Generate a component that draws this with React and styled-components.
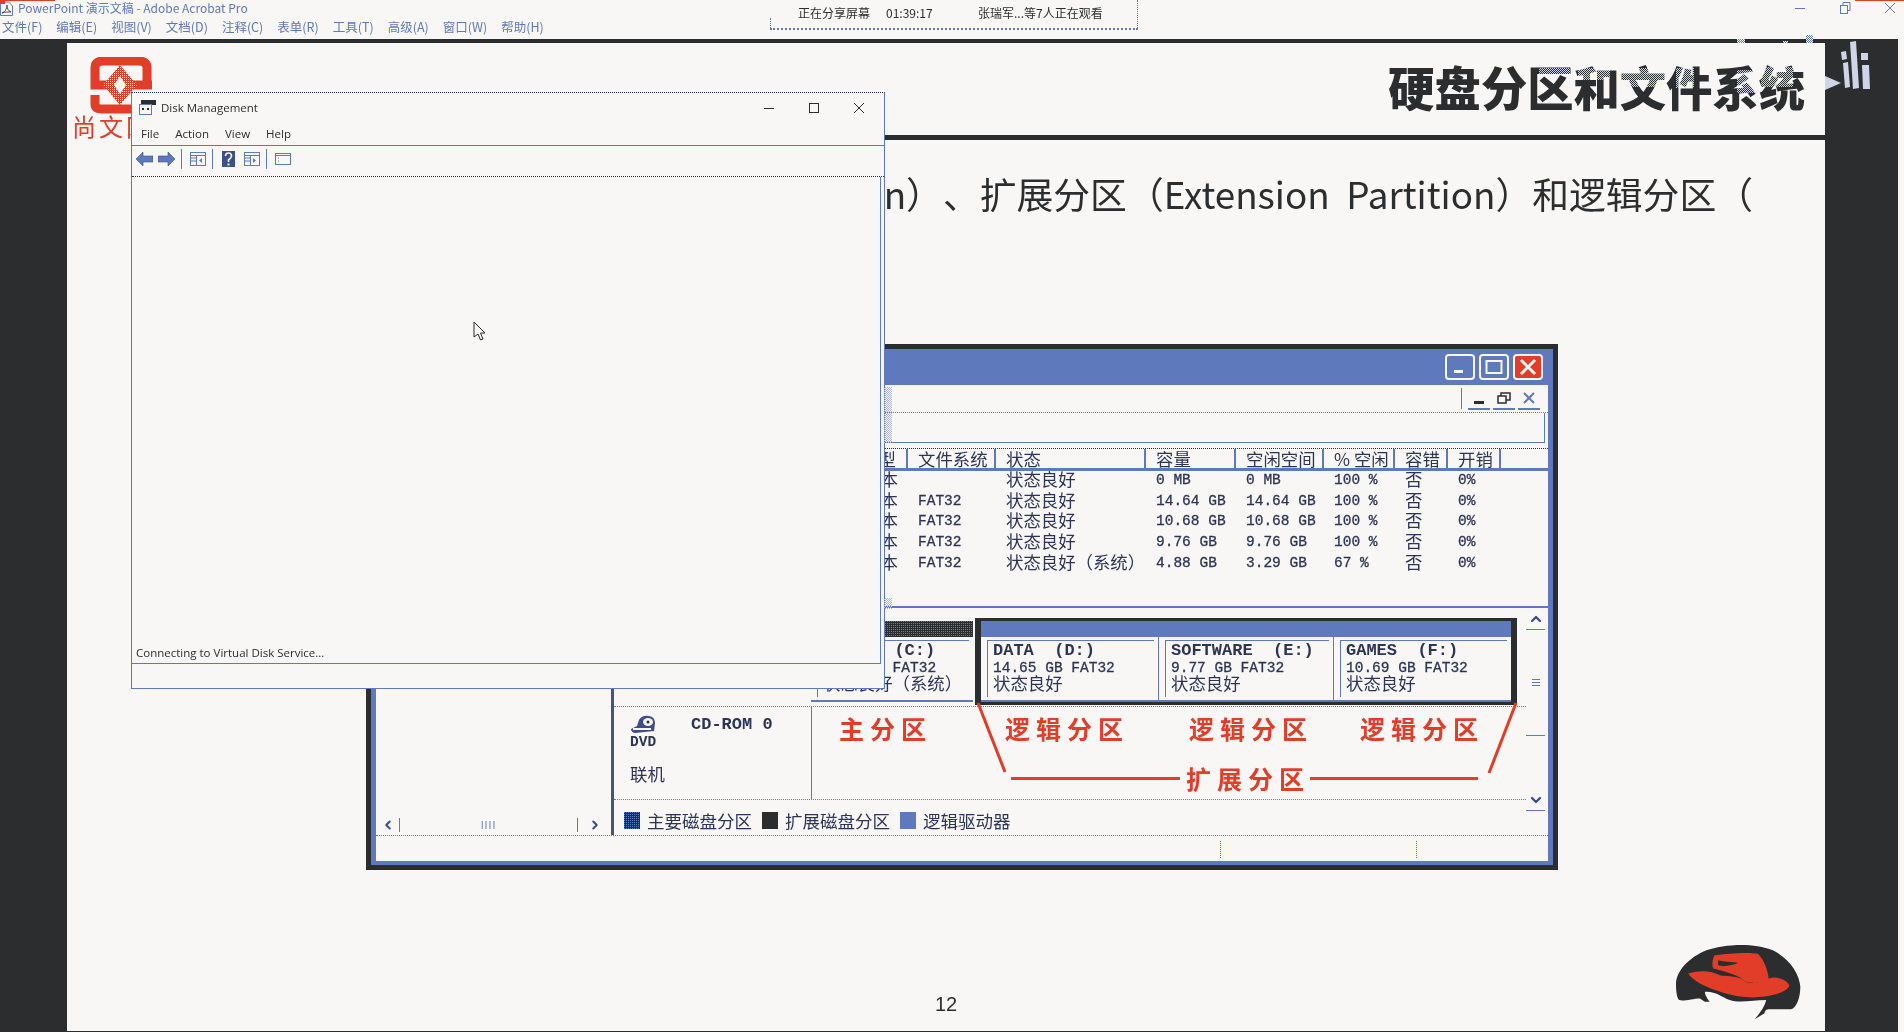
import React from "react";
import styled, { createGlobalStyle } from "styled-components";
import { ChevronLeft, ChevronRight, ChevronUp, ChevronDown } from "lucide-react";

const DARK = "#2b2d2f";
const BLUE = "#5f79bd";
const PAPER = "#f8f7f5";
const RED = "#e23d28";
const INK = "#2c3558";
const CJK = `"Noto Sans CJK SC", "Noto Sans", sans-serif`;
const MONO = `"Liberation Mono", "Noto Sans CJK SC", monospace`;
const UI = `"Open Sans", "Noto Sans CJK SC", sans-serif`;
const DITHER = `repeating-conic-gradient(${DARK} 0 75%, ${BLUE} 0 100%) 0 0 / 2px 2px`;

const Global = createGlobalStyle`
  * { box-sizing: border-box; }
  html, body { margin: 0; padding: 0; background: ${PAPER}; overflow: hidden; }
  body { font-family: ${CJK}; text-spacing-trim: space-all; }
`;

const Page = styled.div`
  position: relative;
  width: 1904px;
  height: 1032px;
  overflow: hidden;
`;

/* ---- acrobat chrome ---- */
const AppBar = styled.header`
  position: relative;
  height: 39px;
  background: ${PAPER};
  color: ${BLUE};
  font-size: 12px;
  &::before, &::after {
    content: "";
    position: absolute;
    top: 0;
    height: 1px;
    background: ${RED};
  }
  &::before { left: 0; width: 55px; }
  &::after { right: 0; width: 49px; }
`;

const AppTitle = styled.div`
  display: flex;
  align-items: center;
  gap: 5px;
  height: 16px;
  white-space: nowrap;
  line-height: 16px;
`;

const AppMenu = styled.nav`
  display: flex;
  gap: 14px;
  padding: 2px 0 0 2px;
  font-size: 12.5px;
  line-height: 17px;
  white-space: nowrap;
`;

const AppControls = styled.div`
  position: absolute;
  top: 0;
  right: 7px;
  display: flex;
  gap: 31px;
  height: 15px;
  align-items: center;
`;

const ShareBar = styled.div`
  position: absolute;
  top: 0;
  left: 770px;
  width: 368px;
  height: 30px;
  padding: 4px 0 0 28px;
  display: grid;
  grid-template-columns: 88px 92px auto;
  font-size: 12px;
  line-height: 17px;
  color: ${DARK};
  border-bottom: 2px dotted ${BLUE};
  border-right: 1px dotted ${BLUE};
  &::before {
    content: "";
    position: absolute;
    left: 0;
    bottom: 0;
    height: 10px;
    border-left: 1px dotted ${BLUE};
  }
`;

/* ---- slide ---- */
const Stage = styled.div`
  display: flex;
  height: 993px;
  background: ${DARK};
`;

const Slide = styled.main`
  display: flex;
  flex-direction: column;
  width: 1758px;
  margin: 4px 0 1px 67px;
  background: ${PAPER};
`;

const RightGutter = styled.div`
  position: relative;
  width: 73px;
`;

const EdgeStrip = styled.div`
  width: 6px;
  background: ${PAPER};
`;

const SlideHead = styled.div`
  display: flex;
  height: 97px;
`;

const Brand = styled.div`
  width: 66px;
  margin-left: 5px;
  padding-top: 14px;
`;

const BrandLogo = styled.svg`
  display: block;
  margin-left: 18px;
`;

const BrandName = styled.div`
  margin-top: -2px;
  font-size: 24px;
  letter-spacing: 3px;
  line-height: 26px;
  white-space: nowrap;
  color: ${RED};
`;

const SlideTitle = styled.h1`
  flex: 1;
  margin: 0;
  padding: 0 20px 8px 0;
  display: flex;
  align-items: center;
  justify-content: flex-end;
  font-size: 46.3px;
  font-weight: 900;
  color: ${DARK};
  border-bottom: 5px solid ${DARK};
`;

/* screen-share artefact: patches of dither eating into the title glyphs */
const TitleGlitch = styled.div`
  position: absolute;
  left: ${(p) => p.$x}px;
  top: ${(p) => p.$y}px;
  width: ${(p) => p.$w}px;
  height: ${(p) => p.$h}px;
  background: repeating-conic-gradient(#cfd6ea 0 25%, #000 0 50%) 0 0 / 2px 2px;
  mix-blend-mode: lighten;
`;

const Speck = styled.div`
  position: absolute;
  left: ${(p) => p.$x}px;
  top: ${(p) => p.$y}px;
  width: ${(p) => p.$w}px;
  height: ${(p) => p.$h}px;
  background: repeating-conic-gradient(${BLUE} 0 25%, ${PAPER} 0 50%) 0 0 / 2px 2px;
`;

const Lead = styled.p`
  height: 204px;
  margin: 0;
  padding: 29px 72px 0 0;
  text-align: right;
  font-size: 36.8px;
  line-height: 48px;
  color: ${DARK};
  white-space: pre;
`;

const SlideFoot = styled.footer`
  flex: 1;
  display: grid;
  grid-template-columns: 1fr auto 1fr;
`;

const PageNo = styled.div`
  margin-top: 122px;
  font-family: "Liberation Sans", sans-serif;
  font-size: 20px;
  line-height: 24px;
  color: ${DARK};
`;

const Hat = styled.svg`
  justify-self: end;
  margin: 73px 24px 0 0;
  width: 126px;
  height: 77px;
`;

/* ---- screenshot of xp disk management on the slide ---- */
const XpWindow = styled.section`
  width: 1192px;
  height: 526px;
  margin-left: 299px;
  border: 5px solid ${DARK};
`;

const XpFrame = styled.div`
  display: flex;
  flex-direction: column;
  height: 100%;
  background: ${PAPER};
  border: solid ${BLUE};
  border-width: 0 5px 4px;
`;

const XpTitle = styled.div`
  display: flex;
  flex: none;
  align-items: center;
  justify-content: flex-end;
  gap: 4px;
  height: 36px;
  padding-right: 5px;
  background: ${BLUE};
`;

const CaptionBtn = styled.div`
  display: flex;
  align-items: center;
  justify-content: center;
  width: 30px;
  height: 26px;
  border: 2px solid ${PAPER};
  border-radius: 4px;
  background: ${(p) => (p.$close ? RED : "transparent")};
`;

const XpMenu = styled.div`
  display: flex;
  flex: none;
  justify-content: flex-end;
  height: 28px;
  padding: 3px 8px 3px 0;
  border-bottom: 1px dotted ${BLUE};
`;

const MdiButtons = styled.div`
  display: flex;
  gap: 3px;
  padding-left: 6px;
  border-left: 1px solid ${BLUE};
`;

const MdiBtn = styled.div`
  display: flex;
  align-items: center;
  justify-content: center;
  width: 22px;
  height: 22px;
  border-bottom: 2px solid ${BLUE};
`;

const XpTools = styled.div`
  flex: none;
  height: 30px;
  margin-right: 3px;
  border-right: 1px solid ${BLUE};
  border-bottom: 1px solid ${BLUE};
`;

const Split = styled.div`
  display: grid;
  flex: none;
  grid-template-columns: 238px 934px;
  height: 392px;
`;

const TreePane = styled.aside`
  display: flex;
  flex-direction: column;
  justify-content: flex-end;
  border-right: 3px solid #46537d;
`;

const TreeScroll = styled.div`
  display: grid;
  grid-template-columns: 23px 1fr 33px;
  align-items: center;
  justify-items: center;
  height: 18px;
  margin-bottom: 1px;
  color: #3c4f8a;
`;

const TreeTrack = styled.div`
  display: flex;
  align-items: center;
  justify-content: center;
  width: 100%;
  height: 14px;
  border: solid ${BLUE};
  border-width: 0 1px;
  color: ${BLUE};
  font-size: 10px;
  letter-spacing: 1px;
  line-height: 14px;
`;

const ListArea = styled.div`
  height: 165px;
  padding-top: 5px;
  border-bottom: 2px solid ${BLUE};
`;

const ListRow = styled.div`
  display: grid;
  grid-template-columns: 294px 88px 150px 90px 88px 71px 53px 53px;
  height: ${(p) => (p.$head ? "23px" : "20.7px")};
  align-items: center;
  color: ${INK};
`;

const ListHead = styled(ListRow)`
  border-top: 1px dotted ${DARK};
  border-bottom: 3px solid ${BLUE};
`;

const Cell = styled.div`
  height: 100%;
  padding: 0 ${(p) => (p.$first ? "10px" : "0")} 0 ${(p) => (p.$first ? "0" : "10px")};
  font-family: ${(p) => (p.$mono ? MONO : CJK)};
  font-size: ${(p) => (p.$mono ? "14.5px" : "17.4px")};
  line-height: ${(p) => (p.$head ? "19px" : p.$mono ? "19px" : "15px")};
  -webkit-text-stroke: ${(p) => (p.$mono ? "0.3px" : "0")};
  text-align: ${(p) => (p.$first ? "right" : "left")};
  white-space: pre;
  border-right: ${(p) => (p.$head ? `2px solid ${BLUE}` : "0")};
`;

const MapArea = styled.div`
  position: relative;
  display: grid;
  grid-template-columns: 912px 22px;
  height: 227px;
`;

const MapMain = styled.div`
  display: flex;
  flex-direction: column;
`;

const DiskRow = styled.div`
  display: flex;
  align-items: flex-start;
  height: 99px;
  padding: 10px 0 0 197px;
  border-bottom: 1px dotted ${BLUE};
`;

const PrimaryBox = styled.div`
  width: 164px;
  margin-top: 3px;
  padding-right: 2px;
`;

const ExtendedBox = styled.div`
  display: grid;
  grid-template-columns: 178px 175px 177px;
  width: 542px;
  height: 87px;
  border: solid ${DARK};
  border-width: 3px 6px;
`;

const Partition = styled.div`
  height: 81px;
  border-bottom: 2px solid ${BLUE};
  border-right: ${(p) => (p.$last ? "0" : `1px solid ${BLUE}`)};
`;

const PartStrip = styled.div`
  height: 16px;
  background: ${(p) => (p.$primary ? DITHER : BLUE)};
`;

const PartBody = styled.div`
  height: 57px;
  margin: 3px 4px 0 6px;
  padding: 1px 0 0 5px;
  border: solid ${BLUE};
  border-width: 1px 0 0 1px;
  color: ${INK};
  white-space: pre;
`;

const PartName = styled.div`
  font-family: ${MONO};
  font-size: 17px;
  font-weight: 700;
  line-height: 18px;
`;

const PartSize = styled.div`
  font-family: ${MONO};
  font-size: 14.5px;
  line-height: 17px;
  -webkit-text-stroke: 0.3px;
`;

const PartState = styled.div`
  margin-top: -2px;
  font-size: 17.4px;
  line-height: 15px;
`;

const CdRow = styled.div`
  display: grid;
  grid-template-columns: 197px 715px;
  height: 93px;
  border-bottom: 1px dotted ${BLUE};
`;

const CdInfo = styled.div`
  display: flex;
  padding: 8px 0 0 16px;
  color: ${INK};
`;

const CdStack = styled.div`
  width: 61px;
  font-family: ${MONO};
  font-size: 14.5px;
  font-weight: 700;
  line-height: 16px;
`;

const CdStatus = styled.div`
  margin-top: 16px;
  font-family: ${CJK};
  font-size: 17.4px;
  font-weight: 400;
`;

const CdIcon = styled.svg`
  display: block;
`;

const CdName = styled.div`
  font-family: ${MONO};
  font-size: 17px;
  font-weight: 700;
  line-height: 20px;
`;

const CalloutPane = styled.div`
  border-left: 1px solid ${BLUE};
  padding-top: 6px;
`;

const Labels = styled.div`
  display: grid;
  grid-template-columns: 193px 184px 171px auto;
`;

const Label = styled.div`
  padding-left: ${(p) => p.$indent || 0}px;
  font-size: 25px;
  font-weight: 700;
  letter-spacing: 6px;
  line-height: 30px;
  white-space: nowrap;
  color: ${RED};
`;

const BraceRow = styled.div`
  display: flex;
  align-items: center;
  margin: 20px 0 0 199px;
`;

const BraceRule = styled.div`
  width: ${(p) => p.$w}px;
  height: 3px;
  margin-right: ${(p) => p.$gap || 0}px;
  background: ${RED};
`;

const Legend = styled.div`
  display: flex;
  align-items: center;
  gap: 10px;
  height: 35px;
  padding: 6px 0 0 10px;
  font-size: 17.5px;
  color: ${INK};
`;

const LegendItem = styled.div`
  display: flex;
  align-items: center;
  gap: 7px;
`;

const Swatch = styled.span`
  width: 16px;
  height: 17px;
  background: ${(p) => (p.$kind === "primary" ? DITHER : p.$kind === "extended" ? DARK : BLUE)};
`;

const MapScroll = styled.div`
  display: flex;
  flex-direction: column;
  padding-right: 3px;
  color: #3c4f8a;
`;

const ScrollBtn = styled.div`
  display: flex;
  align-items: center;
  justify-content: center;
  flex: none;
  height: 22px;
  border-bottom: 1px solid ${BLUE};
`;

const ScrollThumb = styled.div`
  display: flex;
  flex-direction: column;
  flex: none;
  align-items: center;
  justify-content: center;
  gap: 2px;
  height: 106px;
  border-bottom: 1px solid ${BLUE};
`;

const Grip = styled.span`
  width: 8px;
  height: 1px;
  background: ${BLUE};
`;

const ScrollGap = styled.div`
  flex: none;
  height: 53px;
`;

const CalloutLines = styled.svg`
  position: absolute;
  top: 0;
  left: 0;
  pointer-events: none;
`;

const XpStatus = styled.div`
  display: grid;
  flex: none;
  grid-template-columns: 844px 196px 1fr;
  height: 26px;
  padding: 5px 0 3px;
  border-top: 1px dotted ${BLUE};
`;

const StatusCell = styled.div`
  border-left: ${(p) => (p.$first ? "0" : `1px dotted ${BLUE}`)};
`;

/* ---- live windows over the slide ---- */
const DiskMgmt = styled.section`
  position: absolute;
  top: 92px;
  left: 131px;
  display: flex;
  flex-direction: column;
  width: 754px;
  height: 597px;
  background: ${PAPER};
  border: 1px solid ${BLUE};
  border-top: 1px dotted #1f2a4a;
  font-family: ${UI};
  color: ${DARK};
`;

const ShadowPatch = styled.div`
  position: absolute;
  top: ${(p) => p.$top}px;
  left: 100%;
  width: 8px;
  height: ${(p) => p.$h}px;
  background: repeating-conic-gradient(#aebbdc 0 25%, transparent 0 50%) 0 0 / 2px 2px;
`;

const DmTitle = styled.div`
  display: flex;
  align-items: center;
  height: 29px;
  padding: 0 0 0 7px;
  gap: 5px;
  font-size: 11.5px;
`;

const DmName = styled.span`
  flex: 1;
`;

const DmControls = styled.div`
  display: flex;
  gap: 33px;
  padding-right: 19px;
  align-items: center;
`;

const DmMenu = styled.nav`
  display: flex;
  gap: 16px;
  height: 24px;
  padding-left: 9px;
  font-size: 11.5px;
  line-height: 24px;
  border-bottom: 1px solid ${BLUE};
`;

const DmTools = styled.div`
  display: flex;
  align-items: center;
  height: 31px;
  padding: 0 0 4px 4px;
  border-bottom: 1px dotted #1f2a4a;
`;

const ToolSep = styled.span`
  width: 1px;
  height: 20px;
  margin: 0 ${(p) => p.$r || 8}px 0 6px;
  background: ${BLUE};
`;

const ToolIcon = styled.svg`
  flex: none;
  margin-right: ${(p) => p.$gap || 0}px;
  transform: ${(p) => (p.$flip ? "scaleX(-1)" : "none")};
`;

const DmBody = styled.div`
  flex: 1;
  display: flex;
  align-items: flex-end;
  margin-right: 3px;
  padding: 0 0 2px 4px;
  font-size: 11.5px;
  line-height: 16px;
  border-right: 1px solid ${BLUE};
  border-bottom: 1px solid ${BLUE};
`;

const DmFoot = styled.div`
  flex: none;
  height: 24px;
`;

const Cursor = styled.svg`
  position: absolute;
  top: 228px;
  left: 341px;
`;

const GutterArt = styled.svg`
  position: absolute;
  top: 0;
  left: 0;
`;

const listRows = [
  ["本", "", "状态良好", "0 MB", "0 MB", "100 %", "否", "0%"],
  ["本", "FAT32", "状态良好", "14.64 GB", "14.64 GB", "100 %", "否", "0%"],
  ["本", "FAT32", "状态良好", "10.68 GB", "10.68 GB", "100 %", "否", "0%"],
  ["本", "FAT32", "状态良好", "9.76 GB", "9.76 GB", "100 %", "否", "0%"],
  ["本", "FAT32", "状态良好（系统）", "4.88 GB", "3.29 GB", "67 %", "否", "0%"],
];

const listHead = ["型", "文件系统", "状态", "容量", "空闲空间", "% 空闲", "容错", "开销"];
const monoCols = [false, true, false, true, true, true, false, true];

const logicalDrives = [
  { name: "DATA  (D:)", size: "14.65 GB FAT32" },
  { name: "SOFTWARE  (E:)", size: "9.77 GB FAT32" },
  { name: "GAMES  (F:)", size: "10.69 GB FAT32", last: true },
];

const appMenu = ["文件(F)", "编辑(E)", "视图(V)", "文档(D)", "注释(C)", "表单(R)", "工具(T)", "高级(A)", "窗口(W)", "帮助(H)"];

const glitches = [
  [1539, 68, 31, 7],
  [1578, 68, 32, 12],
  [1622, 68, 44, 19],
  [1676, 68, 18, 20],
  [1737, 70, 20, 23],
  [1761, 67, 32, 20],
];

const specks = [
  [1737, 39, 8, 4],
  [1783, 41, 5, 2],
  [1806, 35, 7, 8],
];

const ArrowIcon = ({ flip, gap }) => (
  <ToolIcon $gap={gap} $flip={flip} width="17" height="14" viewBox="0 0 17 14">
    <path d="M0 7 7 0v4h10v6H7v4z" fill={BLUE} stroke="#3c4f8a" strokeWidth="0.6" />
  </ToolIcon>
);

const PaneIcon = ({ side }) => (
  <ToolIcon width="16" height="14" viewBox="0 0 16 14" fill="none" stroke={BLUE}>
    <rect x="0.5" y="0.5" width="15" height="13" />
    <path d="M0.5 3.5h15M6.5 3.5v10M0.5 6h6M0.5 9h6" />
    <path d={side === "left" ? "M12 6v5l-3-2.500z" : "M9 6v5l3-2.500z"} fill={BLUE} stroke="none" />
  </ToolIcon>
);

const App = () => {
  return (
    <Page>
      <Global />
      <AppBar>
        <AppTitle>
          <svg width="13" height="15" viewBox="0 0 13 15" fill="none">
            <path d="M0.500 1h8l4 4v9.500h-12z" stroke={BLUE} />
            <path d="M2 12c3-1 5-4 5-8 0 3 1 6 4 7-3 0-6 0-9 1z" stroke={DARK} strokeWidth="0.8" />
            <rect width="5" height="3" fill={RED} />
          </svg>
          PowerPoint 演示文稿 - Adobe Acrobat Pro
        </AppTitle>
        <AppMenu>
          {appMenu.map((m) => (
            <span key={m}>{m}</span>
          ))}
        </AppMenu>
        <AppControls>
          <svg width="14" height="14" viewBox="0 0 14 14" stroke={BLUE} fill="none">
            <path d="M2 7.500h10" />
          </svg>
          <svg width="14" height="14" viewBox="0 0 14 14" stroke={BLUE} fill="none">
            <rect x="2.500" y="4.500" width="7" height="8" />
            <path d="M5 4.500v-3h7v8h-2.500" />
          </svg>
          <svg width="14" height="14" viewBox="0 0 14 14" stroke={BLUE} fill="none">
            <path d="M2 2l10 10M12 2L2 12" />
          </svg>
        </AppControls>
        <ShareBar>
          <span>正在分享屏幕</span>
          <span>01:39:17</span>
          <span>张瑞军...等7人正在观看</span>
        </ShareBar>
      </AppBar>

      <Stage>
        <Slide>
          <SlideHead>
            <Brand>
              <BrandLogo width="64" height="58" viewBox="0 0 64 58">
                <defs>
                  <pattern id="logoDots" width="2" height="2" patternUnits="userSpaceOnUse">
                    <rect width="2" height="2" fill={RED} />
                    <rect width="1" height="1" fill={PAPER} />
                  </pattern>
                </defs>
                <path d="M57 24V11Q57 4 49 4H13Q5 4 5 11V28H62M5 38V47Q5 52 13 52H54" fill="none" stroke={RED} strokeWidth="9" />
                <path d="M30 8l17 20-17 20-17-20z" fill="url(#logoDots)" />
                <path d="M30 19l6 9-6 9-6-9z" fill={PAPER} />
              </BrandLogo>
              <BrandName>尚文网</BrandName>
            </Brand>
            <SlideTitle>硬盘分区和文件系统</SlideTitle>
          </SlideHead>
          <Lead>{"on）、扩展分区（Extension  Partition）和逻辑分区（"}</Lead>

          <XpWindow>
            <XpFrame>
              <XpTitle>
                <CaptionBtn>
                  <svg width="14" height="14" viewBox="0 0 14 14">
                    <rect x="1" y="10" width="9" height="3" fill={PAPER} />
                  </svg>
                </CaptionBtn>
                <CaptionBtn>
                  <svg width="18" height="16" viewBox="0 0 18 16" fill="none" stroke={PAPER}>
                    <rect x="1.500" y="2" width="15" height="12" strokeWidth="2" />
                  </svg>
                </CaptionBtn>
                <CaptionBtn $close>
                  <svg width="18" height="18" viewBox="0 0 18 18" stroke={PAPER} strokeWidth="3">
                    <path d="M2 2l14 14M16 2L2 16" />
                  </svg>
                </CaptionBtn>
              </XpTitle>
              <XpMenu>
                <MdiButtons>
                  <MdiBtn>
                    <svg width="12" height="12" viewBox="0 0 12 12">
                      <rect x="1" y="9" width="10" height="3" fill={DARK} />
                    </svg>
                  </MdiBtn>
                  <MdiBtn>
                    <svg width="14" height="12" viewBox="0 0 14 12" fill="none" stroke={DARK} strokeWidth="1.500">
                      <rect x="1" y="4" width="8" height="7" />
                      <path d="M4 4V1h9v7h-4" />
                    </svg>
                  </MdiBtn>
                  <MdiBtn>
                    <svg width="12" height="12" viewBox="0 0 12 12" stroke={BLUE} strokeWidth="2">
                      <path d="M1 1l10 10M11 1L1 11" />
                    </svg>
                  </MdiBtn>
                </MdiButtons>
              </XpMenu>
              <XpTools />
              <Split>
                <TreePane>
                  <TreeScroll>
                    <ChevronLeft size={14} strokeWidth={3.5} />
                    <TreeTrack>IIII</TreeTrack>
                    <ChevronRight size={14} strokeWidth={3.5} />
                  </TreeScroll>
                </TreePane>
                <div>
                  <ListArea>
                    <ListHead $head>
                      {listHead.map((h, i) => (
                        <Cell key={h} $head $first={i === 0}>
                          {h}
                        </Cell>
                      ))}
                    </ListHead>
                    {listRows.map((row, r) => (
                      <ListRow key={r}>
                        {row.map((v, i) => (
                          <Cell key={i} $first={i === 0} $mono={monoCols[i]}>
                            {v}
                          </Cell>
                        ))}
                      </ListRow>
                    ))}
                  </ListArea>
                  <MapArea>
                    <MapMain>
                      <DiskRow>
                        <PrimaryBox>
                          <Partition $last>
                            <PartStrip $primary />
                            <PartBody>
                              <PartName>{"       (C:)"}</PartName>
                              <PartSize>4.88 GB FAT32</PartSize>
                              <PartState>状态良好（系统）</PartState>
                            </PartBody>
                          </Partition>
                        </PrimaryBox>
                        <ExtendedBox>
                          {logicalDrives.map((d) => (
                            <Partition key={d.name} $last={d.last}>
                              <PartStrip />
                              <PartBody>
                                <PartName>{d.name}</PartName>
                                <PartSize>{d.size}</PartSize>
                                <PartState>状态良好</PartState>
                              </PartBody>
                            </Partition>
                          ))}
                        </ExtendedBox>
                      </DiskRow>
                      <CdRow>
                        <CdInfo>
                          <CdStack>
                            <CdIcon width="26" height="19" viewBox="0 0 26 19">
                              <path d="M1 14l6-3 2-6q3-5 10-4 6 1 6 7l-1 8-19 2q-4-1-4-4z" fill="#3c4f8a" />
                              <ellipse cx="18" cy="7" rx="5" ry="4" fill={PAPER} />
                              <circle cx="18" cy="7" r="1.500" fill={DARK} />
                              <rect x="3" y="13" width="18" height="2" fill={PAPER} />
                            </CdIcon>
                            DVD
                            <CdStatus>联机</CdStatus>
                          </CdStack>
                          <CdName>CD-ROM 0</CdName>
                        </CdInfo>
                        <CalloutPane>
                          <Labels>
                            <Label $indent={27}>主分区</Label>
                            <Label>逻辑分区</Label>
                            <Label>逻辑分区</Label>
                            <Label>逻辑分区</Label>
                          </Labels>
                          <BraceRow>
                            <BraceRule $w={169} $gap={6} />
                            <Label>扩展分区</Label>
                            <BraceRule $w={168} />
                          </BraceRow>
                        </CalloutPane>
                      </CdRow>
                      <Legend>
                        <LegendItem>
                          <Swatch $kind="primary" />
                          主要磁盘分区
                        </LegendItem>
                        <LegendItem>
                          <Swatch $kind="extended" />
                          扩展磁盘分区
                        </LegendItem>
                        <LegendItem>
                          <Swatch $kind="logical" />
                          逻辑驱动器
                        </LegendItem>
                      </Legend>
                    </MapMain>
                    <MapScroll>
                      <ScrollBtn>
                        <ChevronUp size={16} strokeWidth={3.5} />
                      </ScrollBtn>
                      <ScrollThumb>
                        <Grip />
                        <Grip />
                        <Grip />
                      </ScrollThumb>
                      <ScrollGap />
                      <ScrollBtn>
                        <ChevronDown size={16} strokeWidth={3.5} />
                      </ScrollBtn>
                    </MapScroll>
                    <CalloutLines width="912" height="227" stroke={RED} strokeWidth="3">
                      <path d="M364 95 391 164M902 95 875 165" />
                    </CalloutLines>
                  </MapArea>
                </div>
              </Split>
              <XpStatus>
                <StatusCell $first />
                <StatusCell />
                <StatusCell />
              </XpStatus>
            </XpFrame>
          </XpWindow>

          <SlideFoot>
            <span />
            <PageNo>12</PageNo>
            <Hat viewBox="105 68 380 232">
              <path
                d="M108 190C110 150 150 110 200 90 250 72 340 65 400 90 450 115 480 160 483 200 483 235 470 265 455 268L400 268C385 268 378 265 375 280L345 298C365 275 375 260 380 240 340 240 300 250 270 240 245 230 225 212 195 215 195 225 205 240 210 245L195 245 180 235C160 235 130 245 118 240 110 235 108 210 108 190Z"
                fill={DARK}
              />
              <path
                d="M145 160C180 150 210 150 240 165 265 170 300 165 315 185 340 195 380 180 385 178 400 165 440 175 450 195 445 215 400 230 340 232 280 232 220 210 180 190 165 180 150 170 145 160Z"
                fill={RED}
              />
              <path
                d="M225 105C260 100 320 95 355 100 375 120 385 150 388 178 370 190 340 190 315 185 300 165 260 155 220 145 215 130 220 110 225 105Z"
                fill={RED}
              />
              <path d="M235 120C250 125 280 125 295 128 280 135 250 140 235 135Z" fill={DARK} />
            </Hat>
          </SlideFoot>
        </Slide>
        <RightGutter>
          <GutterArt width="73" height="60" viewBox="0 0 73 60" fill="#cfd5e6">
            <path d="M0 37 16 44 0 51z" />
            <path d="M16 13l5-1 1 8-5 1zM18 24l5-1 2 25-5 1zM25 3l6-1 3 47-6 1zM36 14l7 0v7h-7zM37 26l7 0 1 24-7 0z" />
          </GutterArt>
        </RightGutter>
        <EdgeStrip />
      </Stage>

      {glitches.map(([x, y, w, h]) => (
        <TitleGlitch key={x} $x={x} $y={y} $w={w} $h={h} />
      ))}
      {specks.map(([x, y, w, h]) => (
        <Speck key={x} $x={x} $y={y} $w={w} $h={h} />
      ))}

      <DiskMgmt>
        <DmTitle>
          <svg width="17" height="15" viewBox="0 0 17 15">
            <rect x="2" y="0" width="15" height="5" fill={DARK} />
            <rect x="0.500" y="4.500" width="12" height="10" fill="none" stroke={BLUE} />
            <rect x="3" y="8" width="2" height="2" fill={DARK} />
            <rect x="8" y="8" width="2" height="2" fill={DARK} />
          </svg>
          <DmName>Disk Management</DmName>
          <DmControls>
            <svg width="12" height="12" viewBox="0 0 12 12" stroke={DARK} fill="none">
              <path d="M1 6.500h10" />
            </svg>
            <svg width="12" height="12" viewBox="0 0 12 12" stroke={DARK} fill="none">
              <rect x="1.500" y="1.500" width="9" height="9" />
            </svg>
            <svg width="12" height="12" viewBox="0 0 12 12" stroke={DARK} fill="none">
              <path d="M1 1l10 10M11 1L1 11" />
            </svg>
          </DmControls>
        </DmTitle>
        <DmMenu>
          <span>File</span>
          <span>Action</span>
          <span>View</span>
          <span>Help</span>
        </DmMenu>
        <DmTools>
          <ArrowIcon gap={5} />
          <ArrowIcon flip />
          <ToolSep />
          <PaneIcon side="left" />
          <ToolSep $r={9} />
          <ToolIcon $gap={9} width="13" height="16" viewBox="0 0 13 16">
            <rect width="13" height="16" fill="#3c4f8a" />
            <path d="M3.500 5q0-3 3-3t3 3q0 2-3 4v2" fill="none" stroke={PAPER} strokeWidth="1.600" />
            <rect x="5.500" y="12.500" width="2" height="2" fill={PAPER} />
          </ToolIcon>
          <PaneIcon side="right" />
          <ToolSep />
          <ToolIcon width="16" height="12" viewBox="0 0 16 12" fill="none" stroke={BLUE}>
            <rect x="0.500" y="0.500" width="15" height="11" />
            <path d="M0.500 2.500h15M3 5h1M3 8h1" />
          </ToolIcon>
        </DmTools>
        <DmBody>Connecting to Virtual Disk Service...</DmBody>
        <DmFoot />
        <ShadowPatch $top={294} $h={56} />
        <ShadowPatch $top={505} $h={11} />
        <Cursor width="14" height="20" viewBox="0 0 14 20">
          <path d="M1 1v15l4-3 2.500 6 2.500-1-2.500-6H12z" fill={PAPER} stroke={DARK} />
        </Cursor>
      </DiskMgmt>
    </Page>
  );
};

export default App;
